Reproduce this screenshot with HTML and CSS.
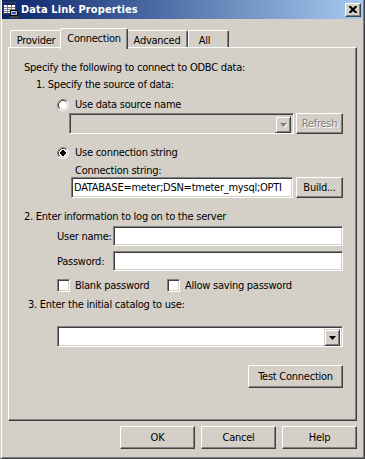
FILE: index.html
```html
<!DOCTYPE html>
<html>
<head>
<meta charset="utf-8">
<title>Data Link Properties</title>
<link rel="stylesheet" href="styles.css">
</head>
<body>
<div class="window">
  <div class="titlebar">
    <svg class="app-icon" width="16" height="16" viewBox="0 0 16 16">
      <rect x="0.5" y="0.5" width="12" height="11" fill="#fff" stroke="#404040"/>
      <rect x="1" y="1" width="11" height="2" fill="#0A246A"/>
      <path d="M1 5.5h11M1 7.5h11M1 9.5h11M4.5 3v8M8.5 3v8" stroke="#808080" stroke-width="1"/>
      <rect x="7.5" y="8.5" width="7" height="5" fill="#C0C0C0" stroke="#000"/>
      <rect x="9" y="10" width="4" height="2" fill="#1E5FD0"/>
      <rect x="7" y="14" width="9" height="2" fill="#404040"/>
    </svg>
    <span class="title">Data Link Properties</span>
    <div class="close">
      <svg width="8" height="7" viewBox="0 0 8 7"><path d="M0 0h2l2 2 2-2h2v1l-2.5 2.5L8 6v1H6L4 5 2 7H0V6l2.5-2.5L0 1z" fill="#000"/></svg>
    </div>
  </div>

  <div class="tabs">
    <div class="tab t-provider">Provider</div>
    <div class="tab tab-active t-conn">Connection</div>
    <div class="tab t-adv">Advanced</div>
    <div class="tab t-all">All</div>
  </div>

  <div class="panel">
    <div class="line intro">Specify the following to connect to ODBC data:</div>
    <div class="line step1">1. Specify the source of data:</div>

    <div class="radio-row r1">
      <svg class="radio" width="12" height="12" viewBox="0 0 12 12">
        <circle cx="6" cy="6" r="5" fill="#fff"/>
        <path d="M2.11 9.89A5.5 5.5 0 0 1 9.89 2.11" fill="none" stroke="#808080"/>
        <path d="M9.89 2.11A5.5 5.5 0 0 1 2.11 9.89" fill="none" stroke="#fff"/>
        <path d="M2.82 9.18A4.5 4.5 0 0 1 9.18 2.82" fill="none" stroke="#404040"/>
        <path d="M9.18 2.82A4.5 4.5 0 0 1 2.82 9.18" fill="none" stroke="#D4D0C8"/>
      </svg>
      <span>Use data source name</span>
    </div>

    <div class="combo-row">
      <div class="combo dsn disabled">
        <div class="combo-btn">
          <svg width="7" height="5" viewBox="0 0 7 5"><path d="M0 0h7L3.5 4z" fill="#808080"/></svg>
        </div>
      </div>
      <div class="btn refresh disabled">Refresh</div>
    </div>

    <div class="radio-row r2">
      <svg class="radio" width="12" height="12" viewBox="0 0 12 12">
        <circle cx="6" cy="6" r="5" fill="#fff"/>
        <path d="M2.11 9.89A5.5 5.5 0 0 1 9.89 2.11" fill="none" stroke="#808080"/>
        <path d="M9.89 2.11A5.5 5.5 0 0 1 2.11 9.89" fill="none" stroke="#fff"/>
        <path d="M2.82 9.18A4.5 4.5 0 0 1 9.18 2.82" fill="none" stroke="#404040"/>
        <path d="M9.18 2.82A4.5 4.5 0 0 1 2.82 9.18" fill="none" stroke="#D4D0C8"/>
        <rect x="4" y="4" width="4" height="4" fill="#000"/>
        <rect x="5" y="3" width="2" height="6" fill="#000"/>
        <rect x="3" y="5" width="6" height="2" fill="#000"/>
      </svg>
      <span>Use connection string</span>
    </div>

    <div class="line connlabel">Connection string:</div>
    <div class="conn-row">
      <div class="edit connedit">DATABASE=meter;DSN=tmeter_mysql;OPTI</div>
      <div class="btn build">Build...</div>
    </div>

    <div class="line step2">2. Enter information to log on to the server</div>
    <div class="field-row user">
      <span class="flabel">User name:</span>
      <div class="edit field"></div>
    </div>
    <div class="field-row pass">
      <span class="flabel">Password:</span>
      <div class="edit field"></div>
    </div>

    <div class="check-row">
      <div class="check-item first"><div class="checkbox"></div><span>Blank password</span></div>
      <div class="check-item"><div class="checkbox"></div><span>Allow saving password</span></div>
    </div>

    <div class="line step3">3. Enter the initial catalog to use:</div>
    <div class="combo catalog">
      <div class="combo-btn">
        <svg width="7" height="4" viewBox="0 0 7 4"><path d="M0 0h7L3.5 4z" fill="#000"/></svg>
      </div>
    </div>

    <div class="test-row">
      <div class="btn test">Test Connection</div>
    </div>
  </div>

  <div class="footer">
    <div class="btn dlg">OK</div>
    <div class="btn dlg">Cancel</div>
    <div class="btn dlg">Help</div>
  </div>
</div>
</body>
</html>
```

FILE: styles.css
```css
* { box-sizing: border-box; }
html, body { margin: 0; padding: 0; }
body {
  width: 365px;
  height: 459px;
  overflow: hidden;
  background: #D4D0C8;
  font-family: "DejaVu Sans Condensed", "DejaVu Sans", "Liberation Sans", sans-serif;
  font-size: 11px;
  letter-spacing: -0.25px;
  color: #000;
}

.window {
  width: 365px;
  height: 459px;
  background: #D4D0C8;
  border-left: 1px solid #D4D0C8;
  border-right: 1px solid #404040;
  border-bottom: 1px solid #404040;
  box-shadow: inset 1px 0 0 #fff, inset -1px -1px 0 #808080;
  padding: 0 1px 1px 1px;
  display: flex;
  flex-direction: column;
}

/* title bar */
.titlebar {
  height: 19px;
  background: linear-gradient(to right, #0A246A, #A6CAF0);
  display: flex;
  align-items: center;
  padding-left: 1px;
  flex: none;
}
.app-icon { flex: none; display: block; }
.title {
  margin-left: 2px;
  color: #fff;
  font-weight: bold;
  font-size: 11px;
  letter-spacing: 0.1px;
  line-height: 14px;
  white-space: nowrap;
}
.close {
  margin-left: auto;
  margin-right: 2px;
  width: 16px;
  height: 14px;
  background: #D4D0C8;
  border-top: 1px solid #fff;
  border-left: 1px solid #fff;
  border-right: 1px solid #404040;
  border-bottom: 1px solid #404040;
  box-shadow: inset -1px -1px 0 #808080;
  display: flex;
  align-items: center;
  justify-content: center;
  padding: 0 1px 1px 0;
}
.close svg { display: block; }

/* tabs */
.tabs {
  margin-top: 9px;
  margin-left: 8px;
  height: 19px;
  display: flex;
  align-items: flex-start;
  flex: none;
}
.tab {
  margin-top: 2px;
  height: 17px;
  border-top: 1px solid #fff;
  border-left: 1px solid #fff;
  border-right: 1px solid #404040;
  box-shadow: inset -1px 0 0 #808080;
  border-top-left-radius: 2px;
  border-top-right-radius: 2px;
  padding-top: 3px;
  line-height: 13px;
  text-align: center;
  white-space: nowrap;
  background: #D4D0C8;
}
.t-provider { width: 52px; }
.t-conn { width: 64px; }
.t-adv { width: 62px; }
.t-all { width: 41px; padding-right: 8px; }
.tab-active {
  position: relative;
  z-index: 2;
  width: 68px;
  height: 21px;
  margin-top: 0;
  margin-left: -2px;
  margin-right: -2px;
}

/* panel */
.panel {
  margin: 0 6px;
  height: 374px;
  flex: none;
  border-top: 1px solid #fff;
  border-left: 1px solid #fff;
  border-right: 1px solid #404040;
  border-bottom: 1px solid #404040;
  box-shadow: inset -1px -1px 0 #808080;
  padding: 13px 13px 0 15px;
  display: flex;
  flex-direction: column;
  align-items: flex-start;
}
.line { line-height: 13px; height: 13px; white-space: nowrap; }
.step1 { margin-top: 4px; margin-left: 12px; }
.radio-row {
  display: flex;
  align-items: center;
  height: 13px;
  margin-left: 33px;
  line-height: 13px;
  white-space: nowrap;
}
.radio { display: block; flex: none; margin-right: 6px; }
.r1 { margin-top: 7px; }
.r2 { margin-top: 12px; }

.combo-row { display: flex; margin-top: 2px; margin-left: 45px; }
.combo {
  height: 21px;
  background: #fff;
  border-top: 1px solid #808080;
  border-left: 1px solid #808080;
  border-right: 1px solid #fff;
  border-bottom: 1px solid #fff;
  box-shadow: inset 1px 1px 0 #404040, inset -1px -1px 0 #D4D0C8;
  display: flex;
  justify-content: flex-end;
  padding: 2px;
}
.combo.disabled { background: #D4D0C8; }
.dsn { width: 225px; }
.combo-btn {
  width: 16px;
  height: 17px;
  background: #D4D0C8;
  border-top: 1px solid #D4D0C8;
  border-left: 1px solid #D4D0C8;
  border-right: 1px solid #404040;
  border-bottom: 1px solid #404040;
  box-shadow: inset 1px 1px 0 #fff, inset -1px -1px 0 #808080;
  display: flex;
  align-items: center;
  justify-content: center;
  padding-top: 1px;
}
.combo-btn svg { display: block; }
.disabled .combo-btn svg { filter: drop-shadow(1px 1px 0 #fff); }

.btn {
  height: 21px;
  background: #D4D0C8;
  border-top: 1px solid #fff;
  border-left: 1px solid #fff;
  border-right: 1px solid #404040;
  border-bottom: 1px solid #404040;
  box-shadow: inset -1px -1px 0 #808080;
  display: flex;
  align-items: center;
  justify-content: center;
  line-height: 13px;
  white-space: nowrap;
  flex: none;
}
.btn.disabled { color: #808080; text-shadow: 1px 1px 0 #fff; }
.refresh { width: 47px; margin-left: 2px; }

.connlabel { margin-top: 5px; margin-left: 51px; }
.conn-row { display: flex; margin-left: 47px; margin-top: 0; }
.edit {
  background: #fff;
  border-top: 1px solid #808080;
  border-left: 1px solid #808080;
  border-right: 1px solid #fff;
  border-bottom: 1px solid #fff;
  box-shadow: inset 1px 1px 0 #404040, inset -1px -1px 0 #D4D0C8;
  line-height: 13px;
  white-space: nowrap;
  overflow: hidden;
}
.connedit {
  width: 222px;
  height: 21px;
  padding: 3px 0 0 2px;
}
.build { width: 47px; margin-left: 3px; }

.step2 { margin-top: 12px; }
.field-row {
  display: flex;
  align-items: center;
  margin-left: 33px;
}
.user { margin-top: 3px; }
.pass { margin-top: 5px; }
.flabel { width: 56px; line-height: 13px; white-space: nowrap; }
.field { width: 230px; height: 20px; }

.check-row { display: flex; margin-top: 8px; margin-left: 33px; height: 13px; }
.check-item { display: flex; align-items: center; line-height: 13px; white-space: nowrap; }
.check-item.first { width: 110px; }
.checkbox {
  width: 13px;
  height: 13px;
  flex: none;
  background: #fff;
  border-top: 1px solid #808080;
  border-left: 1px solid #808080;
  border-right: 1px solid #fff;
  border-bottom: 1px solid #fff;
  box-shadow: inset 1px 1px 0 #404040, inset -1px -1px 0 #D4D0C8;
  margin-right: 5px;
}

.step3 { margin-top: 6px; margin-left: 4px; }
.catalog { width: 286px; margin-top: 15px; margin-left: 33px; }

.test-row { display: flex; justify-content: flex-end; width: 100%; margin-top: 18px; }
.test { width: 95px; height: 23px; }

/* footer */
.footer {
  display: flex;
  justify-content: flex-end;
  gap: 6px;
  margin-top: 5px;
  padding-right: 6px;
}
.dlg { width: 75px; height: 23px; }
```
